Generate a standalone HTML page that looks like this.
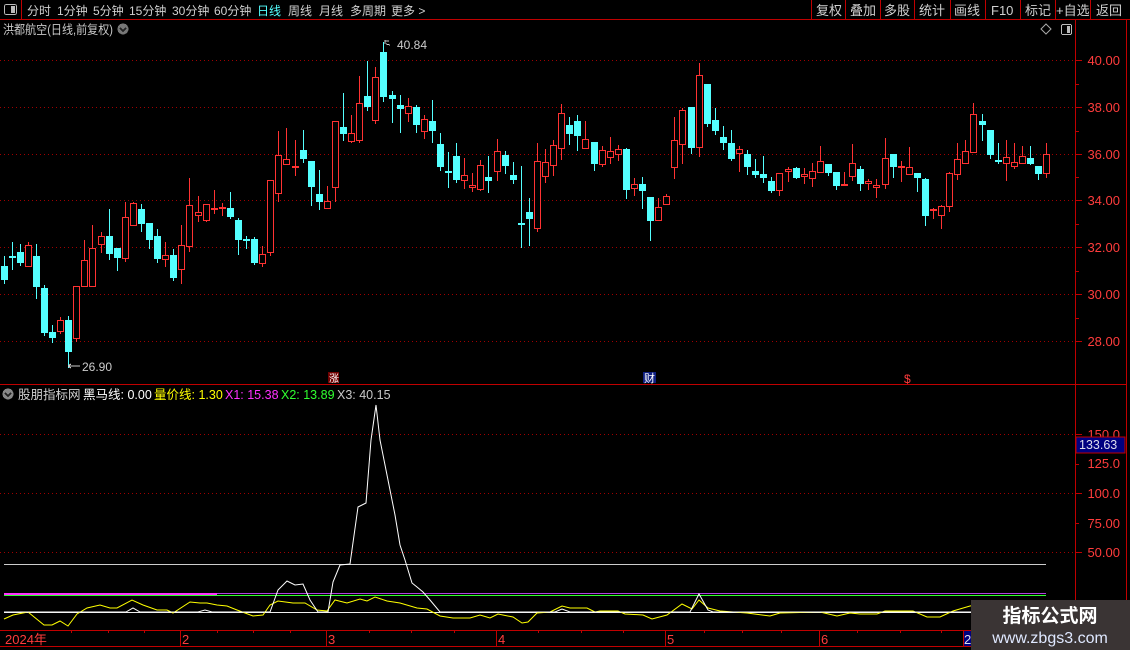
<!DOCTYPE html>
<html><head><meta charset="utf-8"><style>
html,body{margin:0;padding:0;background:#000;width:1130px;height:650px;overflow:hidden}
svg{display:block}
text{font-family:"Liberation Sans","Noto Sans CJK SC",sans-serif}
</style></head><body>
<svg id="s" width="1130" height="650" xmlns="http://www.w3.org/2000/svg" shape-rendering="crispEdges">
<rect width="1130" height="650" fill="#000"/>
<!-- top bar -->
<line x1="0" y1="19.5" x2="1130" y2="19.5" stroke="#c00000"/>
<line x1="21.5" y1="0" x2="21.5" y2="19" stroke="#c00000"/>
<rect x="4.5" y="4.5" width="12" height="10" rx="2" fill="none" stroke="#bbb"/><rect x="11" y="6" width="4" height="7" fill="#bbb"/>
<g font-size="12" fill="#d0d0d0">
<text x="27" y="15">分时</text><text x="57" y="15">1分钟</text><text x="93" y="15">5分钟</text><text x="129" y="15">15分钟</text><text x="172" y="15">30分钟</text><text x="214" y="15">60分钟</text><text x="257" y="15" fill="#54ffff">日线</text><text x="288" y="15">周线</text><text x="319" y="15">月线</text><text x="350" y="15">多周期</text><text x="391" y="15">更多 &gt;</text>
</g>
<g font-size="13" fill="#d0d0d0">
<text x="816" y="15">复权</text><text x="850" y="15">叠加</text><text x="884" y="15">多股</text><text x="919" y="15">统计</text><text x="954" y="15">画线</text><text x="991" y="15">F10</text><text x="1025" y="15">标记</text><text x="1056" y="15">+自选</text><text x="1096" y="15">返回</text>
</g>
<g stroke="#c00000"><line x1="811.5" y1="0" x2="811.5" y2="19"/><line x1="845.5" y1="0" x2="845.5" y2="19"/><line x1="880.5" y1="0" x2="880.5" y2="19"/><line x1="914.5" y1="0" x2="914.5" y2="19"/><line x1="950.5" y1="0" x2="950.5" y2="19"/><line x1="985.5" y1="0" x2="985.5" y2="19"/><line x1="1020.5" y1="0" x2="1020.5" y2="19"/><line x1="1055.5" y1="0" x2="1055.5" y2="19"/><line x1="1090.5" y1="0" x2="1090.5" y2="19"/></g>
<!-- title row -->
<text x="3" y="34" font-size="12.5" fill="#c8c8c8" textLength="110" lengthAdjust="spacingAndGlyphs">洪都航空(日线,前复权)</text>
<circle cx="123" cy="29" r="5.5" fill="#777"/><path d="M120 28l3 3 3-3" stroke="#222" fill="none" stroke-width="1.5"/>
<path d="M1046 24l5 5-5 5-5-5z" fill="none" stroke="#aaa" shape-rendering="auto"/>
<rect x="1061.5" y="24.5" width="10" height="10" rx="1.5" fill="none" stroke="#bbb"/><rect x="1067" y="26" width="3" height="7" fill="#bbb"/>
<!-- frame lines -->
<line x1="1075.5" y1="20" x2="1075.5" y2="630" stroke="#c00000"/>
<line x1="1126.5" y1="20" x2="1126.5" y2="650" stroke="#c00000"/>
<line x1="0" y1="384.5" x2="1126" y2="384.5" stroke="#c00000"/>
<!-- price grid -->
<g stroke="#a00000" stroke-dasharray="1 3">
<line x1="0" y1="60.5" x2="1075" y2="60.5"/><line x1="0" y1="107.5" x2="1075" y2="107.5"/><line x1="0" y1="154.5" x2="1075" y2="154.5"/><line x1="0" y1="200.5" x2="1075" y2="200.5"/><line x1="0" y1="247.5" x2="1075" y2="247.5"/><line x1="0" y1="294.5" x2="1075" y2="294.5"/><line x1="0" y1="341.5" x2="1075" y2="341.5"/>
<line x1="0" y1="434.5" x2="1075" y2="434.5"/><line x1="0" y1="493.5" x2="1075" y2="493.5"/><line x1="0" y1="552.5" x2="1075" y2="552.5"/>
</g>
<g font-size="13" fill="#ff3c3c" text-anchor="end">
<text x="1120" y="65">40.00</text><text x="1120" y="112">38.00</text><text x="1120" y="159">36.00</text><text x="1120" y="205">34.00</text><text x="1120" y="252">32.00</text><text x="1120" y="299">30.00</text><text x="1120" y="346">28.00</text>
<text x="1120" y="439">150.0</text><text x="1120" y="468">125.0</text><text x="1120" y="498">100.0</text><text x="1120" y="528">75.00</text><text x="1120" y="557">50.00</text>
</g>
<g stroke="#c00000">
<line x1="1076" y1="60.5" x2="1082" y2="60.5"/><line x1="1076" y1="107.5" x2="1082" y2="107.5"/><line x1="1076" y1="154.5" x2="1082" y2="154.5"/><line x1="1076" y1="200.5" x2="1082" y2="200.5"/><line x1="1076" y1="247.5" x2="1082" y2="247.5"/><line x1="1076" y1="294.5" x2="1082" y2="294.5"/><line x1="1076" y1="341.5" x2="1082" y2="341.5"/>
<line x1="1076" y1="84.5" x2="1079" y2="84.5"/><line x1="1076" y1="131.5" x2="1079" y2="131.5"/><line x1="1076" y1="177.5" x2="1079" y2="177.5"/><line x1="1076" y1="224.5" x2="1079" y2="224.5"/><line x1="1076" y1="271.5" x2="1079" y2="271.5"/><line x1="1076" y1="318.5" x2="1079" y2="318.5"/>
<line x1="1076" y1="434.5" x2="1082" y2="434.5"/><line x1="1076" y1="493.5" x2="1082" y2="493.5"/><line x1="1076" y1="552.5" x2="1082" y2="552.5"/><line x1="1076" y1="464.5" x2="1079" y2="464.5"/><line x1="1076" y1="523.5" x2="1079" y2="523.5"/>
</g>
<g id="cand"></g>
<!-- annotations -->
<path d="M385 40v4M385 41h4M386 44l4 1" stroke="#ccc" fill="none"/>
<text x="397" y="49" font-size="12" fill="#ccc">40.84</text>
<path d="M68 366h12M68 366l3-2M68 366l3 2" stroke="#ccc" fill="none"/>
<text x="82" y="371" font-size="12" fill="#ccc">26.90</text>
<rect x="328" y="372" width="11" height="11" fill="#700000"/><text x="329" y="382" font-size="10" fill="#fff">涨</text>
<rect x="643" y="372" width="13" height="11" fill="#102080"/><text x="644" y="382" font-size="11" fill="#fff">财</text>
<text x="904" y="383" font-size="12" fill="#ff3c3c">$</text>
<!-- indicator header -->
<circle cx="8" cy="394" r="5.5" fill="#888"/><path d="M5 393l3 3 3-3" stroke="#222" fill="none" stroke-width="1.5"/>
<g font-size="12.5">
<text x="18" y="399" fill="#d0d0d0">股朋指标网</text>
<text x="83" y="399" fill="#fff">黑马线: 0.00</text>
<text x="154" y="399" fill="#ffff00">量价线: 1.30</text>
<text x="225" y="399" fill="#ff30ff">X1: 15.38</text>
<text x="281" y="399" fill="#30ff30">X2: 13.89</text>
<text x="337" y="399" fill="#c8c8c8">X3: 40.15</text>
</g>
<!-- indicator lines -->
<line x1="4" y1="564.5" x2="1046" y2="564.5" stroke="#ccc"/>
<line x1="4" y1="594" x2="217" y2="594" stroke="#ff30ff" stroke-width="2"/>
<line x1="217" y1="593.5" x2="1046" y2="593.5" stroke="#b040e0"/>
<line x1="4" y1="595.5" x2="1046" y2="595.5" stroke="#30ff30"/>
<line x1="4" y1="612.5" x2="1046" y2="612.5" stroke="#eee"/>
<g fill="none" shape-rendering="auto">
<polyline stroke="#ffff00" points="4,619 13,615 28,612 44,625 52,625 60,621 68,626 77,614 87,608 100,605 110,608 117,608 132,600 143,605 157,610 167,610 173,613 190,602 200,603 207,603 217,605 227,606 237,610 253,616 263,615 270,605 278,601 293,603 305,603 317,610 327,611 335,600 347,603 360,599 367,601 375,597 387,601 400,603 417,608 427,609 440,616 453,618 470,618 480,615 490,618 498,614 513,617 522,623 528,622 537,613 550,612 562,606 570,608 587,608 595,612 600,611 618,611 625,614 643,615 652,619 667,615 682,604 692,609 699,600 708,608 720,611 747,613 770,616 780,613 820,612 837,616 850,613 860,614 877,614 885,611 913,611 927,617 940,617 953,611 970,606 990,603"/>
<polyline stroke="#fff" points="4,612 126,612 133,608 140,612 198,612 205,610 212,612 270,612 278,590 287,581 295,585 303,584 310,600 318,612 328,612 333,582 340,565 350,564 358,507 366,503 371,440 376,405 380,440 386,470 395,515 400,545 405,560 412,583 417,587 423,592 430,600 440,612 555,612 562,609 570,612 690,612 699,594 708,610 713,612 1046,612"/>
</g>
<rect x="1076" y="437" width="49" height="16" fill="#000080" stroke="#c00000"/>
<text x="1079" y="449" font-size="12.5" fill="#dde">133.63</text>
<!-- date axis -->
<line x1="0" y1="630.5" x2="1126" y2="630.5" stroke="#c00000"/>
<line x1="0" y1="646.5" x2="1126" y2="646.5" stroke="#c00000"/>
<g stroke="#c00000"><line x1="180.5" y1="630" x2="180.5" y2="647"/><line x1="326.5" y1="630" x2="326.5" y2="647"/><line x1="496.5" y1="630" x2="496.5" y2="647"/><line x1="665.5" y1="630" x2="665.5" y2="647"/><line x1="819.5" y1="630" x2="819.5" y2="647"/><line x1="963.5" y1="630" x2="963.5" y2="647"/>
<line x1="71.5" y1="630" x2="71.5" y2="633"/><line x1="108.5" y1="630" x2="108.5" y2="633"/><line x1="144.5" y1="630" x2="144.5" y2="633"/><line x1="217.5" y1="630" x2="217.5" y2="633"/><line x1="253.5" y1="630" x2="253.5" y2="633"/><line x1="290.5" y1="630" x2="290.5" y2="633"/><line x1="369.5" y1="630" x2="369.5" y2="633"/><line x1="411.5" y1="630" x2="411.5" y2="633"/><line x1="454.5" y1="630" x2="454.5" y2="633"/><line x1="538.5" y1="630" x2="538.5" y2="633"/><line x1="581.5" y1="630" x2="581.5" y2="633"/><line x1="623.5" y1="630" x2="623.5" y2="633"/><line x1="704.5" y1="630" x2="704.5" y2="633"/><line x1="742.5" y1="630" x2="742.5" y2="633"/><line x1="781.5" y1="630" x2="781.5" y2="633"/><line x1="857.5" y1="630" x2="857.5" y2="633"/><line x1="900.5" y1="630" x2="900.5" y2="633"/><line x1="941.5" y1="630" x2="941.5" y2="633"/></g>
<g font-size="13" fill="#ff3c3c"><text x="5" y="644">2024年</text><text x="182" y="644">2</text><text x="328" y="644">3</text><text x="498" y="644">4</text><text x="667" y="644">5</text><text x="821" y="644">6</text></g>
<rect x="964" y="631" width="8" height="15" fill="#000080"/><text x="964" y="644" font-size="13" fill="#dde">2</text>
<!-- watermark -->
<rect x="971" y="600" width="159" height="50" fill="#3a3434"/>
<text x="1050" y="622" font-size="19" font-weight="bold" fill="#fff" text-anchor="middle">指标公式网</text>
<text x="1050" y="643" font-size="16" fill="#dfe8ff" text-anchor="middle">www.zbgs3.com</text>
</svg>
<script>
var d=[[4,266,279,256,283,0],[12,256,256,242,269,0],[20,252,262,244,265,0],[28,245,266,242,266,1],[36,256,286,244,298,0],[44,288,332,285,335,0],[52,332,337,325,342,0],[60,320,331,317,333,1],[68,320,351,316,367,0],[76,286,338,286,341,1],[84,260,286,240,286,1],[92,248,286,225,286,1],[101,236,244,232,252,1],[109,236,253,209,259,0],[117,248,257,248,270,0],[125,217,258,202,261,1],[133,203,225,202,225,1],[141,209,223,204,231,0],[149,223,239,223,248,0],[157,236,258,229,262,0],[165,255,259,242,266,1],[173,255,277,249,280,0],[181,245,269,225,283,1],[189,205,246,178,251,1],[198,212,215,196,221,1],[206,204,220,204,221,1],[214,208,209,190,213,1],[222,207,207,203,215,1],[230,208,216,192,218,0],[238,220,239,218,254,0],[246,239,239,236,248,0],[254,239,262,237,264,0],[262,254,263,246,266,1],[270,180,252,180,255,1],[278,155,193,131,201,1],[286,159,164,128,164,1],[295,166,166,140,175,1],[303,150,158,130,162,0],[311,161,186,161,205,0],[319,194,201,170,209,0],[327,201,208,186,208,1],[335,121,187,121,201,1],[343,127,133,93,140,0],[351,133,141,115,142,1],[359,103,140,76,142,1],[367,96,106,61,110,0],[375,77,120,67,123,1],[383,52,96,42,101,0],[392,95,98,91,122,0],[400,105,108,95,132,0],[408,106,113,98,121,1],[416,107,124,105,132,0],[424,119,131,115,138,1],[432,121,130,100,142,0],[440,144,166,133,170,0],[448,171,171,152,187,0],[456,156,179,143,182,0],[464,175,180,158,188,1],[472,185,187,173,191,1],[480,165,189,160,190,1],[488,177,180,156,192,0],[497,151,171,139,180,1],[505,155,165,151,173,0],[513,175,179,162,183,0],[521,223,223,166,247,0],[529,212,218,198,245,0],[537,161,228,143,231,1],[545,162,176,149,182,1],[553,145,165,140,175,1],[561,113,148,104,159,1],[569,125,133,117,144,0],[577,121,135,115,150,0],[585,139,148,121,148,1],[594,142,163,142,170,0],[602,150,164,146,166,1],[610,151,157,137,163,1],[618,149,154,145,160,1],[626,149,189,148,198,0],[634,184,188,178,195,1],[642,184,190,177,208,0],[650,197,220,197,240,0],[658,207,220,198,220,1],[666,196,204,194,204,1],[674,140,167,117,178,1],[682,110,144,108,163,1],[691,107,147,107,153,0],[699,75,147,63,156,1],[707,84,123,84,126,0],[715,120,130,108,134,0],[723,137,142,126,149,0],[731,143,158,130,160,0],[739,149,153,146,171,1],[747,154,166,150,174,0],[755,171,174,159,177,0],[763,174,177,156,182,0],[771,181,190,177,192,0],[779,173,190,173,195,1],[788,169,171,167,181,1],[796,168,177,167,178,0],[804,174,176,168,183,1],[812,171,178,163,186,1],[820,161,172,146,172,1],[828,164,172,164,175,0],[836,172,185,172,189,0],[844,184,184,172,185,1],[852,163,176,144,180,1],[860,169,183,166,190,0],[868,181,183,179,189,1],[876,185,187,179,197,1],[885,158,184,138,188,1],[893,154,166,154,177,0],[901,166,166,161,181,1],[909,167,174,147,174,1],[917,173,177,173,191,0],[925,179,215,178,225,0],[933,209,209,208,218,1],[941,206,215,205,228,1],[949,173,206,172,211,1],[957,159,174,143,179,1],[965,151,163,140,163,1],[973,114,152,103,152,1],[982,121,124,114,140,0],[990,130,154,130,158,0],[998,160,160,143,163,0],[1006,157,163,140,180,1],[1014,162,166,143,168,1],[1022,156,163,146,163,1],[1030,158,163,146,164,0],[1038,166,173,166,179,0],[1046,154,173,143,177,1]];
var h='';d.forEach(function(c){var x=c[0],col=c[5]?'#ff3232':'#54ffff';
h+='<rect x="'+x+'" y="'+c[3]+'" width="1" height="'+(c[4]-c[3]+1)+'" fill="'+col+'"/>';
if(c[1]==c[2]){h+='<rect x="'+(x-3)+'" y="'+c[1]+'" width="7" height="2" fill="'+col+'"/>';}
else if(c[5]){h+='<rect x="'+(x-2.5)+'" y="'+(c[1]+0.5)+'" width="6" height="'+(c[2]-c[1])+'" fill="#000" stroke="'+col+'"/>';}
else{h+='<rect x="'+(x-3)+'" y="'+c[1]+'" width="7" height="'+(c[2]-c[1]+1)+'" fill="'+col+'"/>';}});
document.getElementById('cand').innerHTML=h;
</script>
</body></html>
